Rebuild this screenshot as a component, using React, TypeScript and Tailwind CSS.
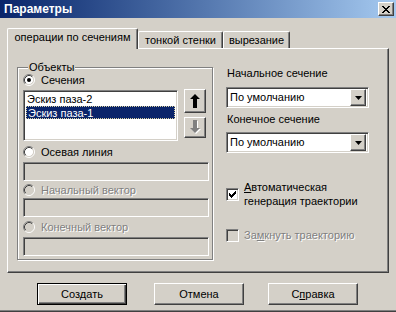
import React from "react";

const raised =
  "border border-t-white border-l-white border-r-[#404040] border-b-[#404040] shadow-[inset_-1px_-1px_0_#808080]";
const sunken =
  "border border-t-[#808080] border-l-[#808080] border-r-white border-b-white shadow-[inset_1px_1px_0_#404040,inset_-1px_-1px_0_#d4d0c8]";
const disabledText = "text-[#808080] [text-shadow:1px_1px_0_#ffffff]";

function Radio({ checked, disabled }: { checked?: boolean; disabled?: boolean }) {
  return (
    <svg width="12" height="12" viewBox="0 0 12 12" className="shrink-0">
      <circle cx="6" cy="6" r="4.5" fill={disabled ? "#d4d0c8" : "#ffffff"} />
      <path d="M2.11 9.89A5.5 5.5 0 0 1 9.89 2.11" stroke="#808080" fill="none" />
      <path d="M9.89 2.11A5.5 5.5 0 0 1 2.11 9.89" stroke="#ffffff" fill="none" />
      <path d="M2.82 9.18A4.5 4.5 0 0 1 9.18 2.82" stroke="#404040" fill="none" />
      <path d="M9.18 2.82A4.5 4.5 0 0 1 2.82 9.18" stroke="#d4d0c8" fill="none" />
      {checked && <circle cx="6" cy="6" r="2" fill="#000000" />}
    </svg>
  );
}

function Check({ checked, disabled }: { checked?: boolean; disabled?: boolean }) {
  return (
    <div
      className={`w-[13px] h-[13px] shrink-0 ${sunken} ${disabled ? "bg-[#d4d0c8]" : "bg-white"} flex items-start justify-start`}
    >
      {checked && (
        <svg width="9" height="9" viewBox="0 0 9 9" className="ml-[1px] mt-[1px]">
          <rect x="1" y="3" width="1" height="3" fill="#000" />
          <rect x="2" y="4" width="1" height="3" fill="#000" />
          <rect x="3" y="5" width="1" height="3" fill="#000" />
          <rect x="4" y="4" width="1" height="3" fill="#000" />
          <rect x="5" y="3" width="1" height="3" fill="#000" />
          <rect x="6" y="2" width="1" height="3" fill="#000" />
          <rect x="7" y="1" width="1" height="3" fill="#000" />
        </svg>
      )}
    </div>
  );
}

function Combo({ value }: { value: string }) {
  return (
    <div className={`w-[143px] h-[21px] bg-white ${sunken} flex items-center p-[2px]`}>
      <span className="flex-1 pl-[1px] leading-[13px]">{value}</span>
      <div className={`w-[16px] h-[17px] bg-[#d4d0c8] ${raised} flex items-center justify-center`}>
        <svg width="7" height="4" viewBox="0 0 7 4">
          <polygon points="0,0 7,0 3.5,4" fill="#000" />
        </svg>
      </div>
    </div>
  );
}

function Tab({ label, active, w }: { label: string; active?: boolean; w: string }) {
  return (
    <div
      className={`${w} ${
        active ? "h-[21px] mb-[-1px] relative z-10" : "h-[17px]"
      } bg-[#d4d0c8] border-l border-t border-r border-l-white border-t-white border-r-[#404040] shadow-[inset_-1px_0_0_#808080] rounded-t-[2px] flex justify-center pt-[2px] leading-[13px] whitespace-nowrap`}
    >
      {label}
    </div>
  );
}

export default function App() {
  return (
    <div className="w-[396px] h-[312px] bg-[#d4d0c8] flex flex-col font-['Liberation_Sans',Arial,sans-serif] text-[11px] leading-[13px] text-black overflow-hidden border-b border-b-[#404040] shadow-[inset_0_-1px_0_#808080]">
      {/* Title bar */}
      <div className="h-[18px] shrink-0 flex items-center justify-between bg-linear-to-r from-[#0a246a] to-[#a6caf0] pl-[4px] pr-[2px]">
        <span className="text-white font-bold text-[12px] leading-[14px]">Параметры</span>
        <div className={`w-[16px] h-[14px] bg-[#d4d0c8] ${raised} flex items-center justify-center`}>
          <svg width="8" height="7" viewBox="0 0 8 7">
            <path
              d="M0 0h2v1h-2z M6 0h2v1h-2z M1 1h2v1h-2z M5 1h2v1h-2z M2 2h4v1h-4z M3 3h2v1h-2z M2 4h4v1h-4z M1 5h2v1h-2z M5 5h2v1h-2z M0 6h2v1h-2z M6 6h2v1h-2z"
              fill="#000"
            />
          </svg>
        </div>
      </div>

      {/* Tabs */}
      <div className="pt-[10px] pl-[7px] h-[30px] shrink-0 flex items-end">
        <Tab label="операции по сечениям" active w="w-[131px]" />
        <Tab label="тонкой стенки" w="w-[85px]" />
        <Tab label="вырезание" w="w-[67px]" />
      </div>

      {/* Panel */}
      <div
        className={`ml-[7px] w-[382px] h-[225px] shrink-0 ${raised} flex items-start pl-[9px] pt-[12px]`}
      >
        {/* Group box */}
        <fieldset className="w-[196px] h-[199px] border border-[#808080] shadow-[inset_1px_1px_0_#ffffff,1px_1px_0_#ffffff] pl-[5px] m-0 pt-0 pb-0 pr-0">
          <legend className="px-[1px] bg-[#d4d0c8] leading-[13px] ml-[5px]">Объекты</legend>
          <div className="flex flex-col">
            <div className="h-[12px] flex items-center gap-[6px]">
              <Radio checked />
              <span>Сечения</span>
            </div>
            <div className="mt-[4px] flex items-start">
              <div className={`w-[155px] h-[51px] bg-white ${sunken} p-[2px] flex flex-col`}>
                <div className="h-[13px] pl-[1px] leading-[13px]">Эскиз паза-2</div>
                <div className="h-[13px] pl-[1px] leading-[12px] bg-[#0a246a] text-white border border-dotted border-[#d8d0a0]">
                  Эскиз паза-1
                </div>
              </div>
              <div className="ml-[6px] flex flex-col gap-[4px] mt-[-1px]">
                <div className={`w-[22px] h-[24px] bg-[#d4d0c8] ${raised} flex items-center justify-center`}>
                  <svg width="10" height="14" viewBox="0 0 10 14">
                    <polygon points="5,0 10,5 7,5 7,14 3,14 3,5 0,5" fill="#000" />
                  </svg>
                </div>
                <div className={`w-[22px] h-[21px] bg-[#d4d0c8] ${raised} flex items-center justify-center`}>
                  <svg width="11" height="15" viewBox="0 0 11 15">
                    <polygon points="4,1 8,1 8,9 11,9 6,14 1,9 4,9" fill="#ffffff" />
                    <polygon points="3,0 7,0 7,8 10,8 5,13 0,8 3,8" fill="#808080" />
                  </svg>
                </div>
              </div>
            </div>
            <div className="mt-[5px] h-[12px] flex items-center gap-[6px]">
              <Radio />
              <span>Осевая линия</span>
            </div>
            <div className={`mt-[4px] w-[186px] h-[19px] bg-[#d4d0c8] ${sunken}`} />
            <div className="mt-[3px] h-[12px] flex items-center gap-[6px]">
              <Radio disabled />
              <span className={disabledText}>Начальный вектор</span>
            </div>
            <div className={`mt-[2px] w-[186px] h-[19px] bg-[#d4d0c8] ${sunken}`} />
            <div className="mt-[4px] h-[12px] flex items-center gap-[6px]">
              <Radio disabled />
              <span className={disabledText}>Конечный вектор</span>
            </div>
            <div className={`mt-[4px] w-[186px] h-[19px] bg-[#d4d0c8] ${sunken}`} />
          </div>
        </fieldset>

        {/* Right column */}
        <div className="ml-[13px] flex flex-col pt-[6px]">
          <div className="pl-[1px]">Начальное сечение</div>
          <div className="mt-[7px]">
            <Combo value="По умолчанию" />
          </div>
          <div className="mt-[5px] pl-[1px]">Конечное сечение</div>
          <div className="mt-[6px]">
            <Combo value="По умолчанию" />
          </div>
          <div className="mt-[27px] flex items-center gap-[5px]">
            <Check checked />
            <div className="leading-[14px]">
              <div>
                <span className="underline">А</span>втоматическая
              </div>
              <div>генерация траектории</div>
            </div>
          </div>
          <div className="mt-[21px] flex items-center gap-[5px]">
            <Check disabled />
            <span className={disabledText}>
              За<span className="underline">м</span>кнуть траекторию
            </span>
          </div>
        </div>
      </div>

      {/* Buttons */}
      <div className="mt-[10px] flex pl-[37px]">
        <div className="w-[90px] h-[22px] border border-black shadow-[inset_1px_1px_0_#ffffff,inset_-1px_-1px_0_#404040,inset_-2px_-2px_0_#808080] flex items-center justify-center">
          Создать
        </div>
        <div className={`ml-[27px] w-[90px] h-[22px] ${raised} flex items-center justify-center`}>
          Отмена
        </div>
        <div className={`ml-[24px] w-[90px] h-[22px] ${raised} flex items-center justify-center`}>
          <span>
            С<span className="underline">п</span>равка
          </span>
        </div>
      </div>
    </div>
  );
}
